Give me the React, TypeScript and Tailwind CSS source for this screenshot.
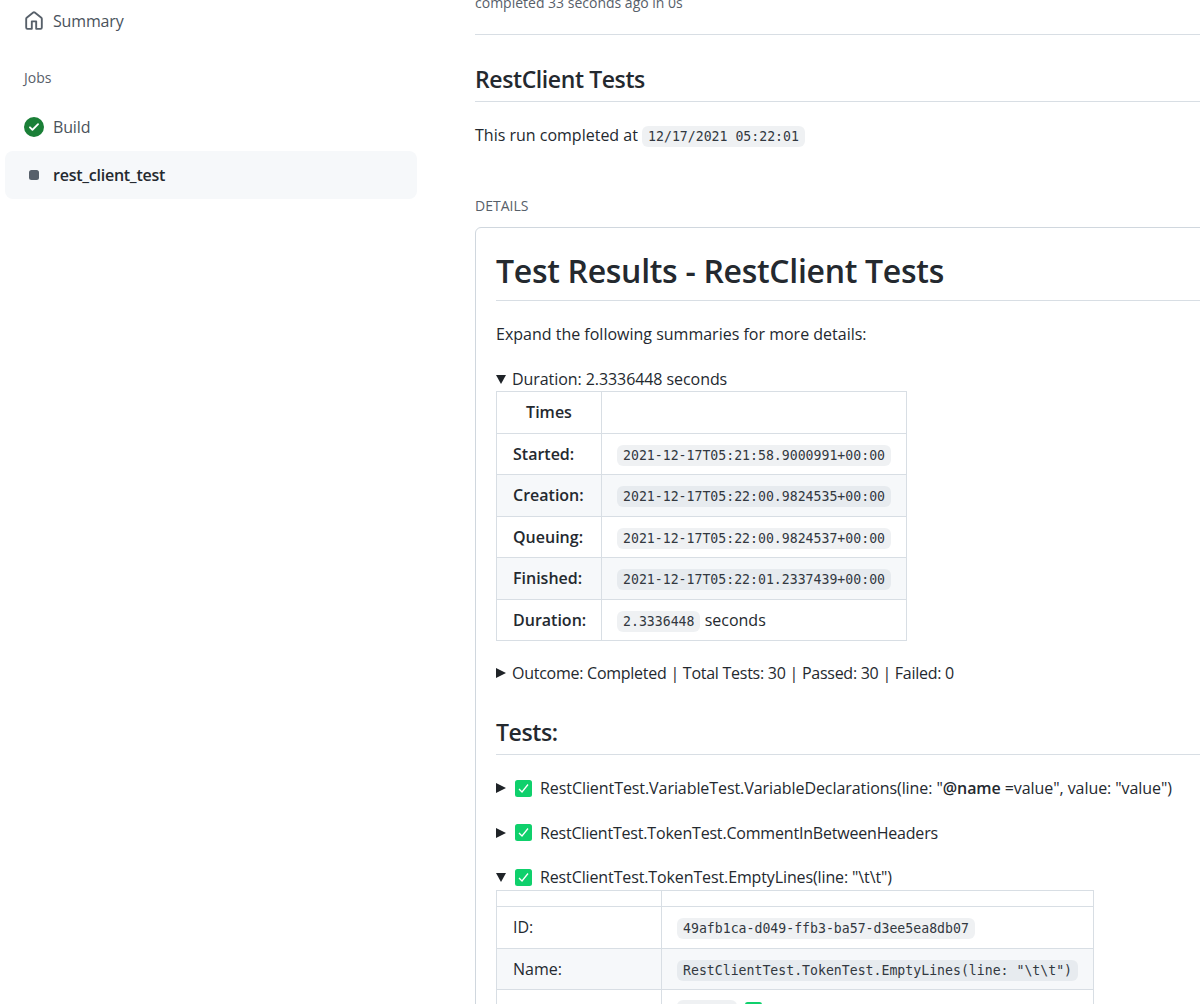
import { ReactNode } from "react";

const sans = "font-['Open_Sans','Noto_Sans',sans-serif]";

function Code({ children }: { children: ReactNode }) {
  return (
    <code className="inline-block whitespace-nowrap rounded-[6px] bg-[#afb8c133] px-[6px] font-['DejaVu_Sans_Mono',monospace] text-[13.2px] leading-[21px] text-[#32383f]">
      {children}
    </code>
  );
}

function Arrow({ open }: { open?: boolean }) {
  return (
    <svg width="10" height="10" viewBox="0 0 10 10" className="shrink-0 fill-[#1f2328]">
      {open ? <path d="M0 1h10L5 10z" /> : <path d="M0 0l10 5-10 5z" />}
    </svg>
  );
}

function PassIcon() {
  return (
    <svg width="17" height="17" viewBox="0 0 17 17" className="block shrink-0">
      <rect width="17" height="17" rx="2.5" fill="#0fd06c" />
      <path d="M4 9l3 3 6-7.5" fill="none" stroke="#fff" strokeWidth="1.3" />
    </svg>
  );
}

function TestRow({ open, children }: { open?: boolean; children: ReactNode }) {
  return (
    <div className="flex h-[24px] items-center">
      <Arrow open={open} />
      <span className="ml-[9px]">
        <PassIcon />
      </span>
      <span className="ml-[8px] whitespace-nowrap">{children}</span>
    </div>
  );
}

const times = [
  ["Started:", "2021-12-17T05:21:58.9000991+00:00"],
  ["Creation:", "2021-12-17T05:22:00.9824535+00:00"],
  ["Queuing:", "2021-12-17T05:22:00.9824537+00:00"],
  ["Finished:", "2021-12-17T05:22:01.2337439+00:00"],
];

const td = "h-[41.5px] border border-[#d8dee4] px-[16px] py-0";

export default function App() {
  return (
    <div className={`${sans} flex h-[1004px] w-[1200px] overflow-hidden bg-white text-[16px] text-[#24292f]`}>
      <aside className="w-[475px] shrink-0 pl-[5px]">
        <div className="flex h-[42px] items-center pl-[19px] text-[#4a525b]">
          <svg width="20" height="20" viewBox="0 0 16 16" className="fill-[#57606a]">
            <path d="M6.906.664a1.749 1.749 0 0 1 2.187 0l5.25 4.2c.415.332.657.835.657 1.367v7.019A1.75 1.75 0 0 1 13.25 15h-3.5a.75.75 0 0 1-.75-.75V9H7v5.25a.75.75 0 0 1-.75.75h-3.5A1.75 1.75 0 0 1 1 13.25V6.23c0-.531.242-1.034.657-1.366l5.25-4.2Zm1.25 1.171a.25.25 0 0 0-.312 0l-5.25 4.2a.25.25 0 0 0-.094.196v7.019c0 .138.112.25.25.25H5.5V8.25a.75.75 0 0 1 .75-.75h3.5a.75.75 0 0 1 .75.75v5.25h2.75a.25.25 0 0 0 .25-.25V6.23a.25.25 0 0 0-.094-.195Z" />
          </svg>
          <span className="ml-[9px] tracking-[-0.15px]">Summary</span>
        </div>
        <div className="mt-[24px] pl-[19px] text-[14px] font-medium leading-[24px] text-[#57606a]">Jobs</div>
        <div className="mt-[13px] flex h-[48px] items-center pl-[19px] text-[#4a525b]">
          <svg width="20" height="20" viewBox="0 0 16 16" className="fill-[#1a7f37]">
            <path d="M8 16A8 8 0 1 1 8 0a8 8 0 0 1 0 16Zm3.78-9.72a.751.751 0 0 0-1.06-1.06L6.75 9.19 5.28 7.72a.751.751 0 0 0-1.06 1.06l2 2a.75.75 0 0 0 1.06 0l4.5-4.5Z" />
          </svg>
          <span className="ml-[9px] tracking-[-0.15px]">Build</span>
        </div>
        <div className="flex h-[48px] w-[412px] items-center rounded-[8px] bg-[#f6f8fa] pl-[24px] font-semibold">
          <span className="h-[10px] w-[10px] rounded-[2.5px] bg-[#57606a]" />
          <span className="ml-[14px] tracking-[-0.25px]">rest_client_test</span>
        </div>
      </aside>

      <main className="w-[900px] shrink-0">
        <div className="mt-[-7px] h-[42px] border-b border-[#d8dee4] text-[14px] leading-[20px] text-[#57606a]">
          completed 33 seconds ago in 0s
        </div>
        <h2 className="mt-[28px] h-[39px] border-b border-[#d8dee4] text-[23px] font-semibold leading-[32px] tracking-[-0.4px]">
          RestClient Tests
        </h2>
        <p className="mt-[21px] leading-[24px]">
          This run completed at <Code>12/17/2021 05:22:01</Code>
        </p>
        <div className="mt-[49px] text-[14px] leading-[20px] text-[#57606a]">DETAILS</div>
        <section className="mt-[11px] rounded-[6px] border border-[#d0d7de] px-[20px] pt-[20px]">
          <h1 className="h-[53px] border-b border-[#d8dee4] text-[32px] font-semibold leading-[46px] tracking-[-0.3px]">
            Test Results - RestClient Tests
          </h1>
          <p className="mt-[21px] leading-[24px]">Expand the following summaries for more details:</p>
          <div className="mt-[21px] flex h-[24px] items-center">
            <Arrow open />
            <span className="ml-[6px] tracking-[-0.07px]">Duration: 2.3336448 seconds</span>
          </div>
          <table className="w-[411px] table-fixed border-collapse">
            <tbody>
              <tr>
                <td className={`${td} w-[105px] text-center font-semibold`}>Times</td>
                <td className={td} />
              </tr>
              {times.map(([label, value], i) => (
                <tr key={label} className={i % 2 === 1 ? "bg-[#f6f8fa]" : ""}>
                  <td className={`${td} font-semibold`}>{label}</td>
                  <td className={`${td} !px-[15px]`}>
                    <Code>{value}</Code>
                  </td>
                </tr>
              ))}
              <tr>
                <td className={`${td} font-semibold`}>Duration:</td>
                <td className={`${td} !px-[15px]`}>
                  <Code>2.3336448</Code> seconds
                </td>
              </tr>
            </tbody>
          </table>
          <div className="mt-[20px] flex h-[24px] items-center">
            <Arrow />
            <span className="ml-[6px] tracking-[-0.26px]">Outcome: Completed | Total Tests: 30 | Passed: 30 | Failed: 0</span>
          </div>
          <h2 className="mt-[31px] h-[39px] border-b border-[#d8dee4] text-[23px] font-semibold leading-[32px] tracking-[-0.4px]">
            Tests:
          </h2>
          <div className="mt-[21px] flex flex-col gap-[20.5px]">
            <TestRow>
              <span className="tracking-[-0.07px]">
                RestClientTest.VariableTest.VariableDeclarations(line: "<b className="font-semibold">@name</b> =value", value: "value")
              </span>
            </TestRow>
            <TestRow>
              <span className="tracking-[-0.19px]">RestClientTest.TokenTest.CommentInBetweenHeaders</span>
            </TestRow>
            <TestRow open>
              <span className="tracking-[-0.12px]">RestClientTest.TokenTest.EmptyLines(line: "\t\t")</span>
            </TestRow>
          </div>
          <table className="mt-[1px] border-collapse">
            <tbody>
              <tr>
                <td className="h-[16px] w-[165px] border border-[#d8dee4] p-0" />
                <td className="w-[432px] border border-[#d8dee4] p-0" />
              </tr>
              <tr className="bg-white">
                <td className={td}>ID:</td>
                <td className={`${td} !px-[15px]`}>
                  <Code>49afb1ca-d049-ffb3-ba57-d3ee5ea8db07</Code>
                </td>
              </tr>
              <tr className="bg-[#f6f8fa]">
                <td className={`${td} font-medium`}>Name:</td>
                <td className={`${td} !px-[15px]`}>
                  <Code>RestClientTest.TokenTest.EmptyLines(line: "\t\t")</Code>
                </td>
              </tr>
              <tr>
                <td className={td} />
                <td className={`${td} !px-[15px]`}>
                  <div className="flex items-center gap-[8px]">
                    <Code>Passed</Code>
                    <PassIcon />
                  </div>
                </td>
              </tr>
            </tbody>
          </table>
        </section>
      </main>
    </div>
  );
}
